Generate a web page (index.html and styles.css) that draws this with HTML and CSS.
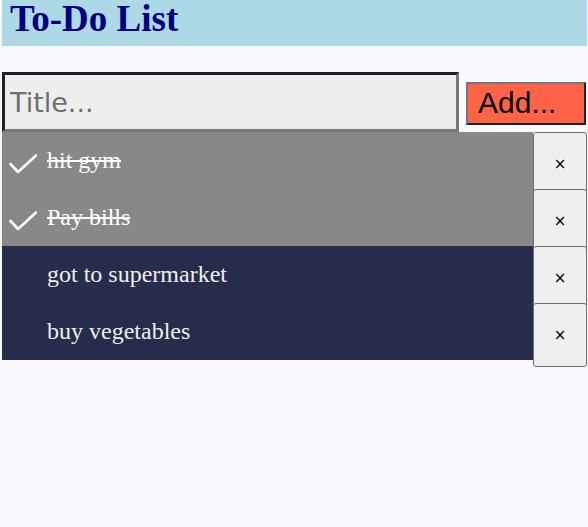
FILE: index.html
```html
<!DOCTYPE html>
<html lang="en">
<head>
<meta charset="utf-8">
<title>To-Do List</title>
<link rel="stylesheet" href="styles.css">
</head>
<body>
<div class="app">
  <header class="header">
    <h1 class="title">To-Do List</h1>
  </header>
  <form class="add-form">
    <input class="add-input" type="text" placeholder="Title...">
    <button class="add-btn" type="button">Add...</button>
  </form>
  <ul class="list">
    <li class="item done">
      <span class="item-text">
        <svg class="check" width="28" height="20" viewBox="0 0 28 20"><path d="M1.5 10 L9 18 L27 1.5" fill="none" stroke="#fff" stroke-width="2.6" stroke-linecap="round" stroke-linejoin="round"/></svg>
        <span class="label">hit gym</span>
      </span>
      <button class="del-btn" type="button">×</button>
    </li>
    <li class="item done">
      <span class="item-text">
        <svg class="check" width="28" height="20" viewBox="0 0 28 20"><path d="M1.5 10 L9 18 L27 1.5" fill="none" stroke="#fff" stroke-width="2.6" stroke-linecap="round" stroke-linejoin="round"/></svg>
        <span class="label">Pay bills</span>
      </span>
      <button class="del-btn" type="button">×</button>
    </li>
    <li class="item">
      <span class="item-text"><span class="label">got to supermarket</span></span>
      <button class="del-btn" type="button">×</button>
    </li>
    <li class="item">
      <span class="item-text"><span class="label">buy vegetables</span></span>
      <button class="del-btn" type="button">×</button>
    </li>
  </ul>
</div>
</body>
</html>
```
FILE: styles.css
```css
html, body {
  margin: 0;
  padding: 0;
  background: #f8f8ff;
}

.app {
  padding: 0 1px 0 2px;
  font-family: "Liberation Serif", "Times New Roman", serif;
}

.header {
  background: #add8e6;
  height: 46px;
  margin-bottom: 26px;
}

.title {
  margin: 0;
  padding: 0 8px;
  font-size: 37px;
  line-height: 38px;
  font-weight: bold;
  color: #000080;
}

.add-form {
  display: flex;
  align-items: center;
  gap: 7px;
  margin: 0;
}

.add-input {
  box-sizing: border-box;
  width: 457px;
  height: 60px;
  margin: 0;
  padding: 0 5px;
  background: #eeeeee;
  border-style: solid;
  border-width: 3px;
  border-color: #222 #777 #777 #222;
  font-family: "Comic Sans MS", "DejaVu Sans", sans-serif;
  font-size: 27px;
  color: #222;
  outline: none;
}

.add-input::placeholder {
  color: #6e6e6e;
}

.add-btn {
  box-sizing: border-box;
  width: 120px;
  height: 43px;
  margin: 2px 0 0 0;
  padding: 0 10px;
  text-align: left;
  background: #ff6347;
  border-style: solid;
  border-width: 2px;
  border-color: #777 #222 #222 #777;
  border-radius: 0;
  font-family: "Liberation Sans", Arial, sans-serif;
  font-size: 30px;
  line-height: 36px;
  color: #000;
}

.list {
  list-style: none;
  margin: 0;
  padding: 0 0 8px;
}

.item {
  display: flex;
  align-items: flex-start;
  height: 57px;
}

.item-text {
  flex: 1;
  display: flex;
  align-items: center;
  height: 57px;
  padding-left: 45px;
  background: #262d4b;
  color: #eeeeee;
  font-size: 24px;
}

.done .item-text {
  padding-left: 7px;
  background: #888888;
  color: #ffffff;
}

.done .label {
  text-decoration: line-through;
  text-decoration-color: #fff;
}

.check {
  flex: none;
  margin: 6px 10px 0 0;
}

.del-btn {
  box-sizing: border-box;
  flex: none;
  width: 54px;
  height: 64px;
  min-height: 64px;
  margin: 0 0 -7px 0;
  padding: 0;
  background: #efefef;
  border: 1px solid #6f6f6f;
  border-radius: 3px;
  font-family: "DejaVu Sans", sans-serif;
  font-size: 15px;
  color: #000;
  position: relative;
}
```
